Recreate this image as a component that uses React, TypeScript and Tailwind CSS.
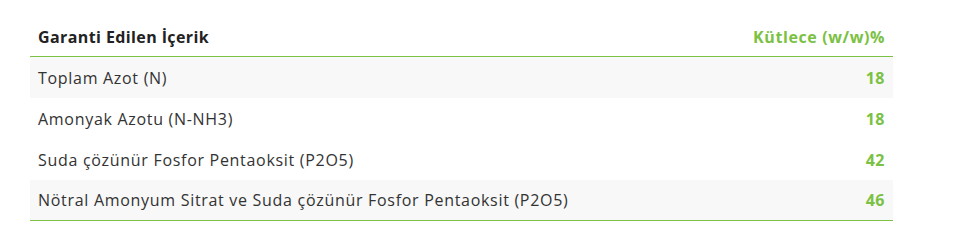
const rows = [
  { name: "Toplam Azot (N)", value: "18" },
  { name: "Amonyak Azotu (N-NH3)", value: "18" },
  { name: "Suda çözünür Fosfor Pentaoksit (P2O5)", value: "42" },
  { name: "Nötral Amonyum Sitrat ve Suda çözünür Fosfor Pentaoksit (P2O5)", value: "46" },
];

export default function App() {
  return (
    <div className="w-[960px] h-[244px] bg-white pt-[17px] pl-[30px] font-['Open_Sans',sans-serif]">
      <div className="w-[863px]">
        <div className="flex items-center justify-between h-[40px] px-[8px] border-b border-[#7bc143]">
          <span className="text-[16px] font-bold tracking-[0.4px] text-[#222]">Garanti Edilen İçerik</span>
          <span className="text-[16px] font-bold tracking-[0.6px] text-[#7bc143]">Kütlece (w/w)%</span>
        </div>
        {rows.map((r, i) => (
          <div
            key={r.name}
            className={`flex items-center justify-between h-[41px] px-[8px] ${
              i === 0 || i === 3 ? "bg-[#f8f8f8]" : "bg-white"
            } ${i === 3 ? "border-b border-[#7bc143]" : ""}`}
          >
            <span className="text-[16px] tracking-[0.7px] text-[#333]">{r.name}</span>
            <span className="text-[16px] font-bold tracking-[0.5px] text-[#7bc143]">{r.value}</span>
          </div>
        ))}
      </div>
    </div>
  );
}
